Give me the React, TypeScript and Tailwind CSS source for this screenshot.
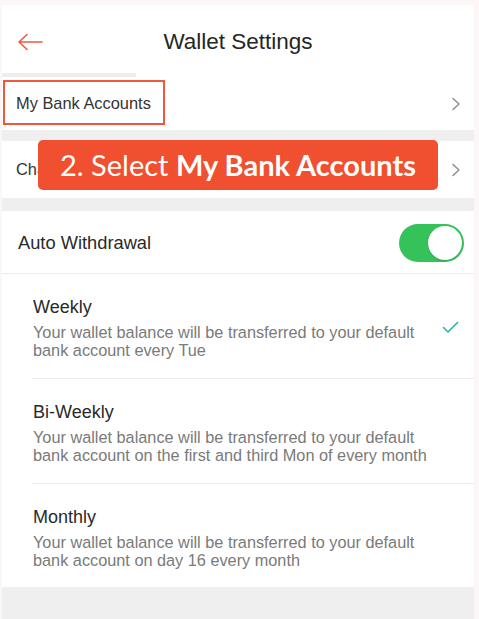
import React from "react";

function Chevron() {
  return (
    <svg width="10" height="14" viewBox="0 0 10 14" fill="none">
      <path d="M2 1.5 L8 7 L2 12.5" stroke="#8a8a8a" strokeWidth="1.4" strokeLinecap="round" strokeLinejoin="round" />
    </svg>
  );
}

function Option({ title, desc, checked, last }: { title: string; desc: string[]; checked?: boolean; last?: boolean }) {
  return (
    <div className={"ml-[30px] pl-[1px] pr-[15px] flex items-center justify-between " + (last ? "pt-[21px] pb-[18px]" : "pt-[21px] pb-[19px] border-b border-[#ececec]")}>
      <div>
        <div className="text-[18px] leading-[24px] text-[#2a2a2a]">{title}</div>
        <div className="mt-[4px] text-[16.3px] leading-[18px] text-[#7a7a7a]">
          {desc.map((d, i) => (
            <div key={i}>{d}</div>
          ))}
        </div>
      </div>
      {checked && (
        <svg width="17" height="13" viewBox="0 0 17 13" fill="none">
          <path d="M1.5 6.5 L6 11 L15.5 1.5" stroke="#2ab5a5" strokeWidth="1.6" strokeLinecap="round" strokeLinejoin="round" />
        </svg>
      )}
    </div>
  );
}

export default function App() {
  return (
    <div className="w-[479px] h-[619px] bg-[#fdf6f6] pt-[5px] pl-[2px] pr-[5px] overflow-hidden" style={{ fontFamily: '"Liberation Sans", Arial, sans-serif' }}>
      <div className="relative h-full bg-white flex flex-col">
        {/* Header */}
        <div className="h-[68px] relative flex items-center pt-[6px]">
          <div className="pl-[15px]">
            <svg width="26" height="18" viewBox="0 0 26 18" fill="none">
              <path d="M25 9 H2 M10 1.5 L2 9 L10 16.5" stroke="#ee5a3e" strokeWidth="1.6" strokeLinecap="round" strokeLinejoin="round" />
            </svg>
          </div>
          <div className="absolute inset-x-0 top-[6px] bottom-0 flex items-center justify-center pointer-events-none">
            <span className="text-[22.5px] text-[#262626]">Wallet Settings</span>
          </div>
        </div>
        <div className="h-[4px] w-[134px] bg-[#ededed]" />

        {/* My Bank Accounts */}
        <div className="relative h-[53px] flex items-center justify-between pl-[14px] pr-[13px]">
          <span className="text-[16.4px] text-[#333]">My Bank Accounts</span>
          <Chevron />
          <div className="absolute left-[1px] top-[3px] w-[162px] h-[45px] border-2 border-[#f0583b]" />
        </div>
        <div className="h-[11px] bg-[#efefef]" />

        {/* Change row */}
        <div className="h-[57px] flex items-center justify-between pl-[14px] pr-[13px]">
          <span className="text-[16.4px] text-[#333]">Change Wallet PIN</span>
          <Chevron />
        </div>
        <div className="h-[13px] bg-[#efefef]" />

        {/* Auto Withdrawal */}
        <div className="h-[63px] flex items-center justify-between pl-[16px] pr-[10px] border-b border-[#ececec] pt-[2px]">
          <span className="text-[18.3px] text-[#2a2a2a]">Auto Withdrawal</span>
          <div className="w-[65px] h-[38px] rounded-full bg-[#36c25b] flex items-center justify-end pr-[2px]">
            <div className="w-[34px] h-[34px] rounded-full bg-white shadow-[0_1px_2px_rgba(0,0,0,0.15)]" />
          </div>
        </div>

        <Option
          title="Weekly"
          desc={["Your wallet balance will be transferred to your default", "bank account every Tue"]}
          checked
        />
        <Option
          title="Bi-Weekly"
          desc={["Your wallet balance will be transferred to your default", "bank account on the first and third Mon of every month"]}
        />
        <Option
          title="Monthly"
          desc={["Your wallet balance will be transferred to your default", "bank account on day 16 every month"]}
          last
        />
        <div className="flex-1 bg-[#efefef]" />

        {/* Callout */}
        <div className="absolute left-[36px] top-[135px] w-[400px] h-[50px] rounded-[5px] bg-[#f04f30] flex items-center justify-center text-white text-[29px]" style={{ fontFamily: 'Lato, "Noto Sans", sans-serif' }}>
          <span>2. Select <span className="font-bold">My Bank Accounts</span></span>
        </div>
      </div>
    </div>
  );
}
